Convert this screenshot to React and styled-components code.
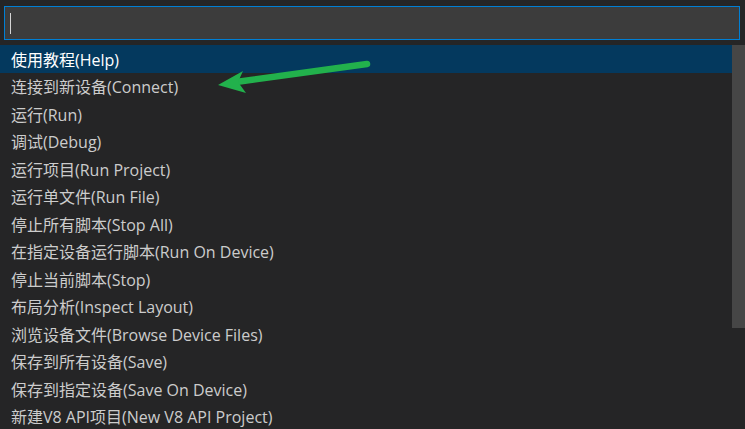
import React from 'react';
import styled, { createGlobalStyle } from 'styled-components';

const GlobalStyle = createGlobalStyle`
  html, body {
    margin: 0;
    padding: 0;
    height: 429px;
    overflow: hidden;
    background: #252526;
  }
  * { box-sizing: border-box; }
`;

const ITEMS = [
  '使用教程(Help)',
  '连接到新设备(Connect)',
  '运行(Run)',
  '调试(Debug)',
  '运行项目(Run Project)',
  '运行单文件(Run File)',
  '停止所有脚本(Stop All)',
  '在指定设备运行脚本(Run On Device)',
  '停止当前脚本(Stop)',
  '布局分析(Inspect Layout)',
  '浏览设备文件(Browse Device Files)',
  '保存到所有设备(Save)',
  '保存到指定设备(Save On Device)',
  '新建V8 API项目(New V8 API Project)',
];

const Widget = styled.div`
  position: relative;
  width: 745px;
  height: 429px;
  background: #252526;
  font-family: "Open Sans", "Noto Sans CJK SC", sans-serif;
  font-size: 16px;
  overflow: hidden;
`;

const InputWrap = styled.div`
  padding: 6px 5px 5px 4px;
  height: 45px;
`;

const InputBox = styled.div`
  height: 34px;
  background: #3c3c3c;
  border: 1px solid #007fd4;
  display: flex;
  align-items: center;
  padding-left: 5px;
`;

const Caret = styled.span`
  display: block;
  width: 1px;
  height: 21px;
  background: #d4d4d4;
`;

const ListArea = styled.div`
  display: flex;
`;

const List = styled.div`
  flex: 1;
  display: flex;
  flex-direction: column;
`;

const Row = styled.div`
  height: 27.5px;
  flex: none;
  display: flex;
  align-items: center;
  padding-left: 11px;
  white-space: nowrap;
  color: ${p => (p.$selected ? '#ffffff' : '#cccccc')};
  background: ${p => (p.$selected ? '#04395e' : 'transparent')};
`;

const Scrollbar = styled.div`
  width: 13px;
  height: 283px;
  background: rgba(121, 121, 121, 0.4);
`;

const Arrow = styled.svg`
  position: absolute;
  left: 0;
  top: 0;
  pointer-events: none;
`;

export default function App() {
  return (
    <Widget>
      <GlobalStyle />
      <InputWrap>
        <InputBox>
          <Caret />
        </InputBox>
      </InputWrap>
      <ListArea>
        <List>
          {ITEMS.map((t, i) => (
            <Row key={t} $selected={i === 0}>{t}</Row>
          ))}
        </List>
        <Scrollbar />
      </ListArea>
      <Arrow width="745" height="429" viewBox="0 0 745 429">
        <line x1="367" y1="64" x2="236" y2="82" stroke="#22b14c" strokeWidth="6.5" strokeLinecap="round" />
        <polygon points="218,85 243,71 238,82 246,93" fill="#22b14c" />
      </Arrow>
    </Widget>
  );
}
